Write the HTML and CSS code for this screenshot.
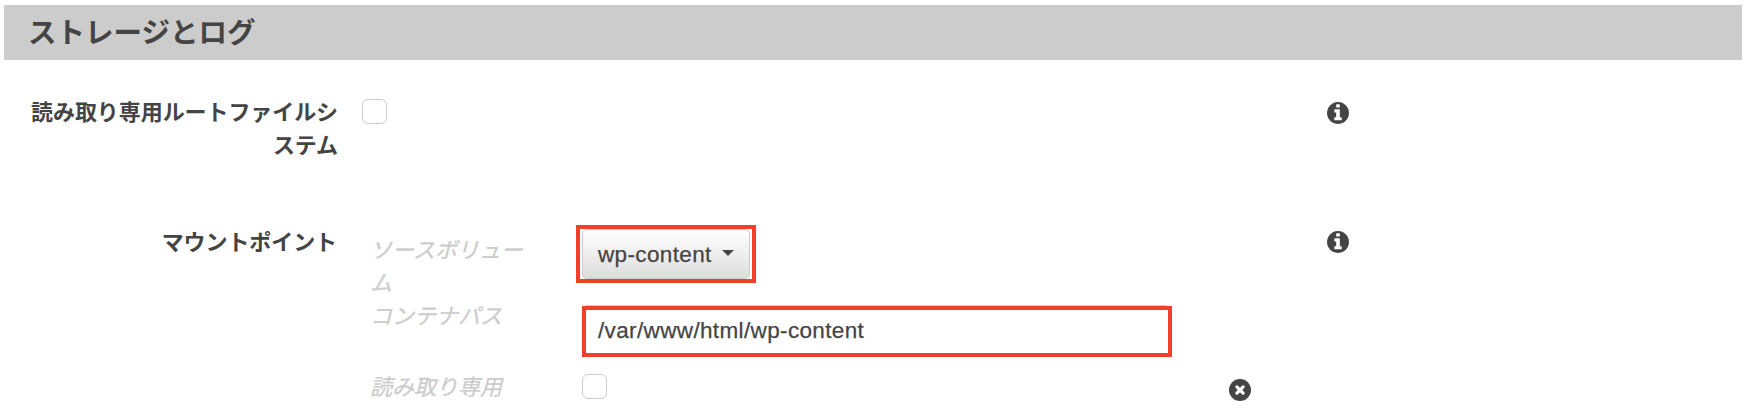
FILE: index.html
```html
<!DOCTYPE html>
<html lang="ja">
<head>
<meta charset="utf-8">
<title>ストレージとログ</title>
<link rel="stylesheet" href="styles.css">
</head>
<body>
<section class="panel">
  <h2 class="panel-title">ストレージとログ</h2>
  <div class="row row-root">
    <div class="label">読み取り専用ルートファイルシステム</div>
    <div class="field"><span class="checkbox"></span></div>
    <svg class="icon info" viewBox="0 0 1536 1536"><path d="M1024 1248v-160q0-14-9-23t-23-9h-96V544q0-14-9-23t-23-9H544q-14 0-23 9t-9 23v160q0 14 9 23t23 9h96v320h-96q-14 0-23 9t-9 23v160q0 14 9 23t23 9h448q14 0 23-9t9-23zM896 352V192q0-14-9-23t-23-9H672q-14 0-23 9t-9 23v160q0 14 9 23t23 9h192q14 0 23-9t9-23zM1536 768q0 209-103 385.500T1153.500 1433 768 1536 382.500 1433 103 1153.500 0 768 103 382.500 382.500 103 768 0t385.500 103T1433 382.500 1536 768z"/></svg>
  </div>
  <div class="row row-mount">
    <div class="label">マウントポイント</div>
    <div class="field mount">
      <div class="sub sub-volume">
        <div class="hint">ソースボリューム</div>
        <div class="mark mark-select"><button class="select"><span class="select-text">wp-content</span><span class="caret"></span></button></div>
      </div>
      <div class="sub sub-path">
        <div class="hint">コンテナパス</div>
        <div class="path-box"><div class="path-edge"></div><div class="mark mark-path"><span class="path-text">/var/www/html/wp-content</span></div></div>
      </div>
      <div class="sub sub-readonly">
        <div class="hint">読み取り専用</div>
        <span class="checkbox"></span>
        <svg class="icon remove" viewBox="0 0 22 22"><circle cx="11" cy="11" r="11"/><path class="cross" d="M7.900 7.900l6.200 6.200M14.100 7.900l-6.200 6.200"/></svg>
      </div>
    </div>
    <svg class="icon info" viewBox="0 0 1536 1536"><path d="M1024 1248v-160q0-14-9-23t-23-9h-96V544q0-14-9-23t-23-9H544q-14 0-23 9t-9 23v160q0 14 9 23t23 9h96v320h-96q-14 0-23 9t-9 23v160q0 14 9 23t23 9h448q14 0 23-9t9-23zM896 352V192q0-14-9-23t-23-9H672q-14 0-23 9t-9 23v160q0 14 9 23t23 9h192q14 0 23-9t9-23zM1536 768q0 209-103 385.500T1153.500 1433 768 1536 382.500 1433 103 1153.500 0 768 103 382.500 382.500 103 768 0t385.500 103T1433 382.500 1536 768z"/></svg>
  </div>
</section>
</body>
</html>
```
FILE: styles.css
```css
* { box-sizing: border-box; }
body {
  margin: 0;
  background: #fff;
  color: #444;
  font: 22px/33px "Liberation Sans", "Noto Sans CJK JP", sans-serif;
}
.panel { padding: 5px 8px 0 4px; }
.panel-title {
  margin: 0;
  height: 55px;
  padding: 1px 0 0 24px;
  background: #ccc;
  font-size: 28.500px;
  line-height: 55px;
}
.row {
  display: grid;
  grid-template-columns: 310px 965px 44px;
  align-items: start;
  padding-left: 26px;
}
.row-root { padding-top: 35px; height: 165px; }
.label {
  padding: 1px 2px 0 0;
  font-weight: 700;
  letter-spacing: -.08px;
  text-align: right;
}
.row-mount .label { padding-right: 3px; }
.field { padding-left: 22px; }
.checkbox {
  display: block;
  width: 25px;
  height: 25px;
  border: 1px solid #ccc;
  border-radius: 6px;
  background: #fff;
}
.row-root .checkbox { margin-top: 4px; }
.icon { display: block; width: 22px; height: 22px; fill: #444; }
.info { margin: 7px 0 0 22px; }
.row-mount .info { margin-top: 6px; }
.mount { padding-left: 30px; }
.sub { display: grid; grid-template-columns: 160px 1fr; align-items: start; }
.sub-volume { height: 75px; column-gap: 46px; }
.sub-path { height: 70px; column-gap: 52px; }
.sub-readonly { grid-template-columns: 160px 25px 22px; column-gap: 52px; }
.hint {
  color: #ccc;
  font-style: italic;
  -webkit-text-stroke: .3px #ccc;
}
.sub-volume .hint { padding-top: 9px; }
.sub-readonly .hint { padding-top: 1px; }
.mark { border: 4px solid #ee4128; }
.mark-select { width: 180px; height: 58px; padding: 0 2px; }
.select {
  display: flex;
  align-items: center;
  width: 168px;
  height: 50px;
  padding: 0 0 0 15px;
  border: 1px solid #ccc;
  border-radius: 5px;
  background: linear-gradient(#fff, #ddd);
  color: #444;
  font: inherit;
}
.select-text, .path-text {
  font-size: 22.500px;
  letter-spacing: .36px;
  -webkit-text-stroke: .25px #444;
}
.caret {
  margin: -3px 0 0 10px;
  border: 6px solid transparent;
  border-top-color: #444;
  border-bottom: 0;
}
.path-box { width: 590px; padding-top: 5px; }
.path-edge { height: 1px; margin: 0 5px 0 3px; background: #ccc; }
.mark-path { height: 51px; padding-left: 12px; line-height: 41px; }
.sub-readonly .checkbox { margin-top: 4px; }
.remove { margin: 9px 0 0 570px; }
.cross { fill: none; stroke: #fff; stroke-width: 3.200; stroke-linecap: round; }
```
